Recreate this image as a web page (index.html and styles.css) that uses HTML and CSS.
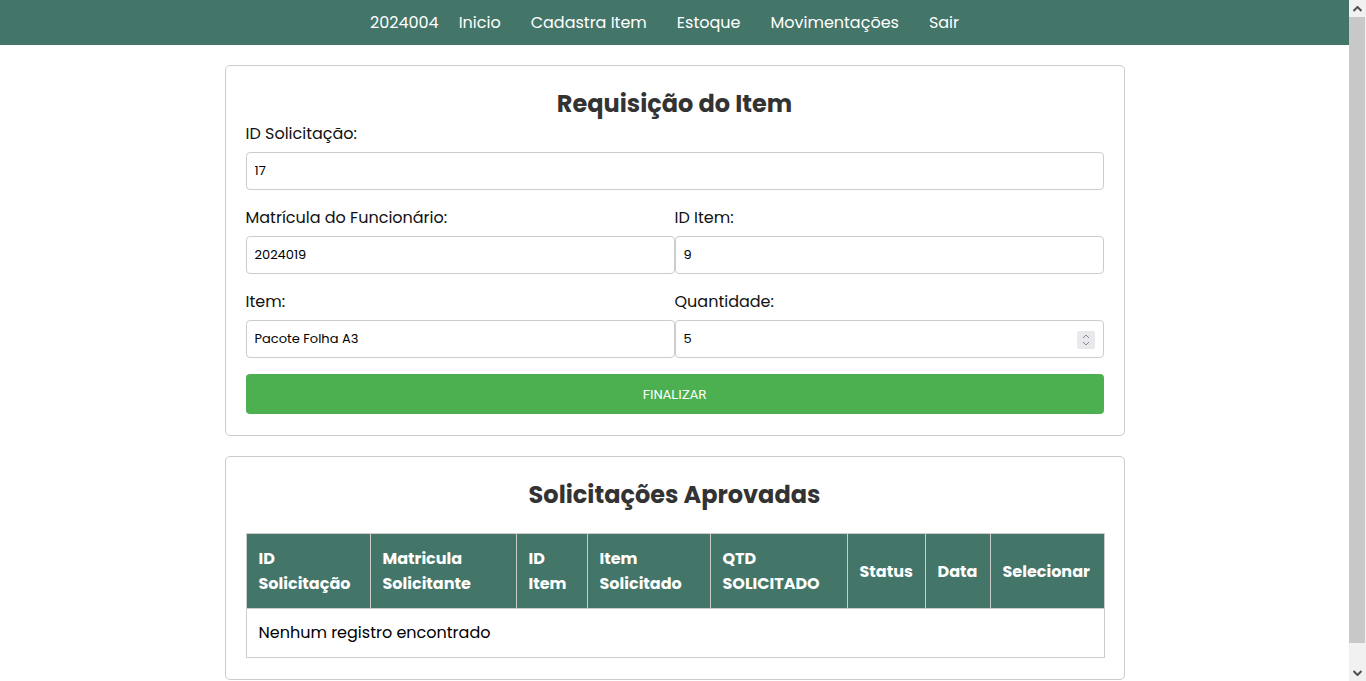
FILE: index.html
```html
<!DOCTYPE html>
<html lang="pt-BR">
<head>
<meta charset="utf-8">
<title>Requisição do Item</title>
<link rel="stylesheet" href="styles.css">
</head>
<body>
<nav class="topbar">
  <span class="user">2024004</span>
  <a class="nav-link" href="#">Inicio</a>
  <a class="nav-link" href="#">Cadastra Item</a>
  <a class="nav-link" href="#">Estoque</a>
  <a class="nav-link" href="#">Movimentações</a>
  <a class="nav-link" href="#">Sair</a>
</nav>

<main class="page">
  <section class="card">
    <h2 class="card-title">Requisição do Item</h2>
    <div class="field">
      <label class="label">ID Solicitação:</label>
      <input class="input" type="text" value="17">
    </div>
    <div class="row">
      <div class="field">
        <label class="label">Matrícula do Funcionário:</label>
        <input class="input" type="text" value="2024019">
      </div>
      <div class="field">
        <label class="label">ID Item:</label>
        <input class="input" type="text" value="9">
      </div>
    </div>
    <div class="row">
      <div class="field">
        <label class="label">Item:</label>
        <input class="input" type="text" value="Pacote Folha A3">
      </div>
      <div class="field">
        <label class="label">Quantidade:</label>
        <div class="num-wrap">
          <input class="input" type="text" value="5">
          <span class="spinner">
            <svg width="10" height="14" viewBox="0 0 10 14"><path d="M2 5 L5 2 L8 5" fill="none" stroke="#888" stroke-width="1"/><path d="M2 9 L5 12 L8 9" fill="none" stroke="#888" stroke-width="1"/></svg>
          </span>
        </div>
      </div>
    </div>
    <button class="btn">FINALIZAR</button>
  </section>

  <section class="card">
    <h2 class="card-title">Solicitações Aprovadas</h2>
    <table class="table">
      <thead>
        <tr>
          <th class="c1">ID<br>Solicitação</th>
          <th class="c2">Matricula<br>Solicitante</th>
          <th class="c3">ID<br>Item</th>
          <th class="c4">Item<br>Solicitado</th>
          <th class="c5">QTD<br>SOLICITADO</th>
          <th class="c6">Status</th>
          <th class="c7">Data</th>
          <th class="c8">Selecionar</th>
        </tr>
      </thead>
      <tbody>
        <tr><td colspan="8">Nenhum registro encontrado</td></tr>
      </tbody>
    </table>
  </section>
</main>

<div class="scrollbar" aria-hidden="true">
  <span class="sb-btn">
    <svg width="9" height="6" viewBox="0 0 9 6"><path d="M0.5 5 L4.5 1 L8.5 5" fill="none" stroke="#505050" stroke-width="2"/></svg>
  </span>
  <span class="sb-thumb"></span>
  <span class="sb-btn sb-bottom">
    <svg width="9" height="6" viewBox="0 0 9 6"><path d="M0.5 1 L4.5 5 L8.5 1" fill="none" stroke="#505050" stroke-width="2"/></svg>
  </span>
</div>
</body>
</html>
```
FILE: styles.css
```css
* { box-sizing: border-box; }
html, body { overflow: hidden; }
body {
  margin: 0;
  padding-right: 17px;
  font-family: Poppins, "DejaVu Sans", sans-serif;
  color: #000;
  background: #fff;
}
.topbar {
  height: 45px;
  background: #437568;
  display: flex;
  justify-content: center;
  align-items: center;
  padding-right: 5px;
}
.user {
  color: #fff;
  font-size: 16px;
  margin-right: 5px;
}
.nav-link {
  color: #fff;
  text-decoration: none;
  font-size: 16px;
  padding: 0 15px;
}
.page {
  width: 900px;
  margin: 20px auto;
  display: flex;
  flex-direction: column;
  gap: 20px;
}
.card {
  border: 1px solid #ccc;
  border-radius: 5px;
  padding: 20px 20px 21px;
}
.card-title {
  margin: 0;
  text-align: center;
  font-size: 24px;
  line-height: 36px;
  font-weight: 700;
  color: #333;
}
.field { margin-bottom: 16px; }
.label {
  display: block;
  font-size: 16px;
  line-height: 23px;
  margin-bottom: 7px;
  color: #111;
}
.row {
  display: grid;
  grid-template-columns: 1fr 1fr;
}
.input {
  display: block;
  width: 100%;
  height: 38px;
  border: 1px solid #ccc;
  border-radius: 4px;
  padding: 0 8px;
  font-family: Poppins, "DejaVu Sans", sans-serif;
  font-size: 13px;
  color: #000;
}
.num-wrap { position: relative; }
.spinner {
  position: absolute;
  right: 9px;
  top: 11px;
  width: 18px;
  height: 18px;
  background: #e9e9ed;
  border-radius: 2px;
  display: flex;
  align-items: center;
  justify-content: center;
}
.btn {
  display: block;
  width: 100%;
  height: 40px;
  border: none;
  border-radius: 4px;
  background: #4caf50;
  color: #fff;
  font-family: Roboto, "Liberation Sans", sans-serif;
  font-size: 13px;
}
.table {
  width: 100%;
  margin-top: 20px;
  border-collapse: collapse;
  table-layout: fixed;
}
.table th {
  background: #437568;
  color: #fff;
  font-size: 16px;
  line-height: 25px;
  font-weight: 700;
  text-align: left;
  padding: 12px 12px;
  border: 1px solid #ccc;
  vertical-align: middle;
}
.table td {
  border: 1px solid #ccc;
  padding: 12px 12px;
  font-size: 16px;
  line-height: 24px;
}
.c1 { width: 124px; }
.c2 { width: 146px; }
.c3 { width: 71px; }
.c4 { width: 123px; }
.c5 { width: 137px; }
.c6 { width: 78px; }
.c7 { width: 65px; }
.c8 { width: 114px; }

.scrollbar {
  position: fixed;
  top: 0;
  right: 0;
  width: 17px;
  height: 100%;
  background: #f1f1f1;
  display: flex;
  flex-direction: column;
}
.sb-btn {
  height: 17px;
  display: flex;
  align-items: center;
  justify-content: center;
}
.sb-thumb {
  flex: 1;
  margin: 0 1px 21px 0;
  background: #c8c8c8;
}
.sb-bottom {
  margin-top: auto;
}
```
